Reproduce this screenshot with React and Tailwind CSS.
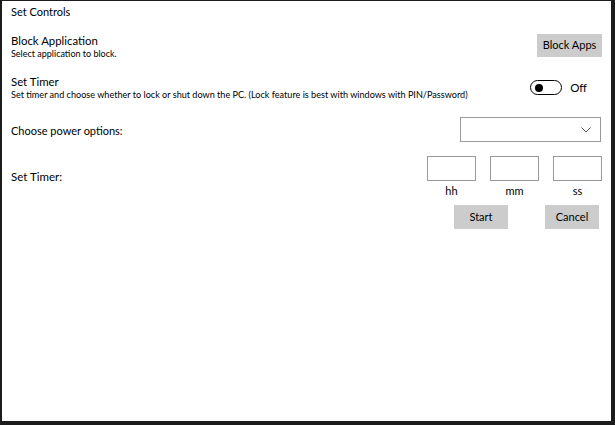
import React from "react";

export default function App() {
  return (
    <div className="w-[615px] h-[425px] bg-white border-l-2 border-t border-r-4 border-b-4 border-[#1c1c1c] font-['Lato',sans-serif] text-black box-border overflow-hidden">
      <div className="pl-[8px] pr-[9px]">
        <div className="pt-[3px] pl-[1px] text-[11px] leading-[16px]">Set Controls</div>

        <div className="flex items-start justify-between mt-[13px]">
          <div className="pl-[1px]">
            <div className="text-[11.4px] leading-[15px]">Block Application</div>
            <div className="text-[9px] leading-[12px]">Select application to block.</div>
          </div>
          <button className="w-[65px] h-[23px] bg-[#cccccc] text-[11px] mt-[1px]">Block Apps</button>
        </div>

        <div className="flex items-center justify-between mt-[14px]">
          <div className="pl-[1px]">
            <div className="text-[11.4px] leading-[15px]">Set Timer</div>
            <div className="text-[9.1px] leading-[12px]">
              Set timer and choose whether to lock or shut down the PC. (Lock feature is best with windows with PIN/Password)
            </div>
          </div>
          <div className="flex items-center mr-[15px] mb-[1px] mt-[1px]">
            <div className="w-[32px] h-[15px] rounded-full border border-black flex items-center pl-[4px]">
              <div className="w-[8px] h-[8px] rounded-full bg-black" />
            </div>
            <span className="ml-[8px] text-[11.5px]">Off</span>
          </div>
        </div>

        <div className="flex items-center justify-between mt-[16px]">
          <div className="pl-[1px] text-[11px] pt-[3px]">Choose power options:</div>
          <div className="w-[141px] h-[25px] border border-[#999999] flex items-center justify-end pr-[9px] mr-[1px]">
            <svg width="10" height="6" viewBox="0 0 10 6" fill="none">
              <path d="M0.5 0.5 L5 5 L9.5 0.5" stroke="#555" strokeWidth="1" />
            </svg>
          </div>
        </div>

        <div className="flex justify-between mt-[14px]">
          <div className="pl-[1px] text-[11.5px] pt-[12px]">Set Timer:</div>
          <div className="flex flex-col items-end">
            <div className="flex gap-[14px]">
              {["hh", "mm", "ss"].map((l) => (
                <div key={l} className="flex flex-col items-center">
                  <div className="w-[49px] h-[25px] border border-[#999999]" />
                  <div className="text-[11px] leading-[14px] mt-[3px]">{l}</div>
                </div>
              ))}
            </div>
            <div className="flex gap-[37px] mt-[7px] mr-[3px]">
              <button className="w-[54px] h-[24px] bg-[#cccccc] text-[11px]">Start</button>
              <button className="w-[54px] h-[24px] bg-[#cccccc] text-[11px]">Cancel</button>
            </div>
          </div>
        </div>
      </div>
    </div>
  );
}
